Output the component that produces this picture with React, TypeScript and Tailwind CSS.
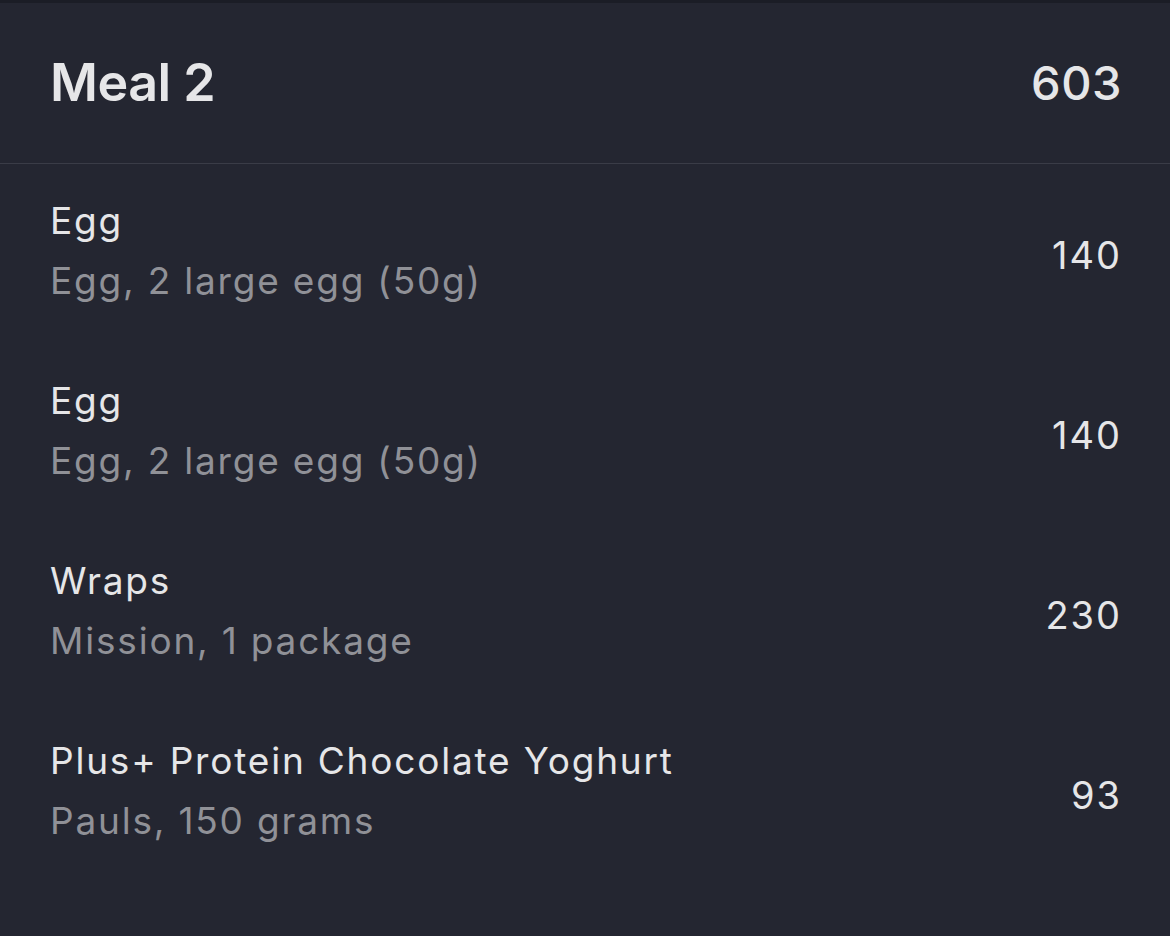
const items = [
  { name: "Egg", detail: "Egg, 2 large egg (50g)", cal: 140 },
  { name: "Egg", detail: "Egg, 2 large egg (50g)", cal: 140 },
  { name: "Wraps", detail: "Mission, 1 package", cal: 230 },
  { name: "Plus+ Protein Chocolate Yoghurt", detail: "Pauls, 150 grams", cal: 93 },
];

export default function App() {
  return (
    <div className="min-h-screen w-full bg-[#242631] font-['Inter',sans-serif] antialiased">
      <div className="h-[3px] bg-[#1b1d26]" />
      {/* header */}
      <div className="flex h-[161px] items-center justify-between border-b border-[#3a3c47] pl-[50px] pr-[48px]">
        <h1 className="text-[52px] font-semibold tracking-[-0.5px] text-[#e6e6e8]">Meal 2</h1>
        <span className="text-[47px] font-medium tracking-[0.5px] text-[#e6e6e8]">603</span>
      </div>

      {/* food list */}
      <div className="flex flex-col">
        {items.map((item, i) => (
          <div key={i} className="flex h-[180px] items-center justify-between pb-[6px] pl-[50px] pr-[48px]">
            <div className="flex flex-col tracking-[1.8px]">
              <span className="text-[37px] leading-[60px] text-[#e6e6e8]">{item.name}</span>
              <span className="text-[37px] leading-[60px] text-[#909197]">{item.detail}</span>
            </div>
            <span className="pt-[8px] text-[38px] tracking-[2px] text-[#e6e6e8]">{item.cal}</span>
          </div>
        ))}
      </div>
    </div>
  );
}
